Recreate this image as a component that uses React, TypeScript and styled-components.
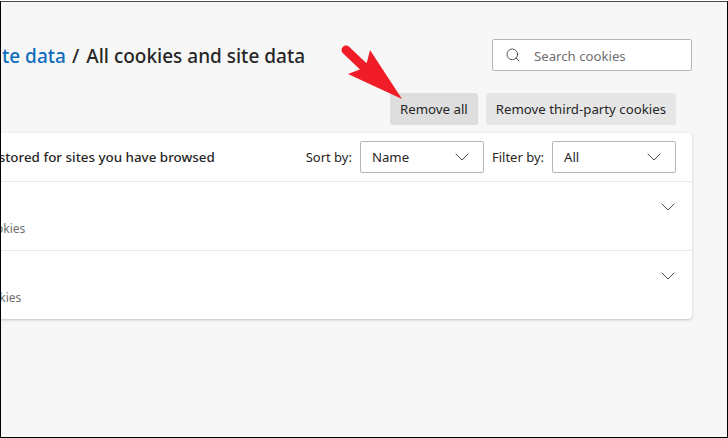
import * as React from 'react'

import styled, { createGlobalStyle } from 'styled-components'
import { ChevronDown, Search } from 'lucide-react'

const GlobalStyle = createGlobalStyle`
  html, body {
    margin: 0;
    padding: 0;
    background: #fff;
    font-family: "Noto Sans", "Open Sans", sans-serif;
  }
`

const Frame = styled.div`
  position: relative;
  box-sizing: border-box;
  width: 728px;
  height: 437px;
  margin-top: 1px;
  overflow: hidden;
  background: #f7f7f7;
  border-top: 1px solid #4a4a4a;
  border-left: 1px solid #000;
  border-right: 1px solid #000;
  border-bottom: 1px solid #000;
`

const Content = styled.div`
  display: flex;
  flex-direction: column;
  width: 826px;
  margin-left: -135px;
  padding-top: 37px;
`

const TitleRow = styled.div`
  display: flex;
  align-items: center;
  justify-content: space-between;
`

const Title = styled.h1`
  margin: 2px 0 0 6px;
  font-size: 19px;
  font-weight: 500;
  color: #262626;
  white-space: nowrap;
`

const Crumb = styled.a`
  margin-right: 6px;
  color: #0f6cbd;
`

const Separator = styled.span`
  margin-right: 7px;
`

const SearchBox = styled.label`
  box-sizing: border-box;
  display: flex;
  align-items: center;
  gap: 13px;
  width: 200px;
  height: 32px;
  padding-left: 12px;
  background: #fff;
  border: 1px solid #b5b5b5;
  border-radius: 2px;
  color: #3b3b3b;
`

const SearchInput = styled.input`
  flex: 1;
  min-width: 0;
  border: 0;
  outline: 0;
  padding: 1px 0 0;
  background: transparent;
  font: inherit;
  font-size: 13.2px;

  &::placeholder {
    color: #6f6f6f;
    opacity: 1;
  }
`

const Actions = styled.div`
  display: flex;
  justify-content: flex-end;
  gap: 8px;
  margin-top: 22px;
  padding-right: 16px;
`

const ActionButton = styled.button<{ $active?: boolean }>`
  height: 32px;
  padding: 0 10px;
  border: 0;
  border-radius: 2px;
  background: ${({ $active }) => ($active ? '#dedede' : '#e6e6e6')};
  color: #262626;
  font: inherit;
  font-size: 13.25px;
  white-space: nowrap;
`

const Card = styled.section`
  margin-top: 8px;
  background: #fff;
  border-radius: 4px;
  box-shadow: 0 1px 3px rgba(0, 0, 0, 0.22);
`

const CardHeader = styled.div`
  display: flex;
  align-items: center;
  justify-content: space-between;
  height: 48px;
  padding: 0 16px 0 19px;
`

const CardTitle = styled.h2`
  margin: 0;
  font-size: 13.4px;
  font-weight: 500;
  color: #262626;
  white-space: nowrap;
`

const Controls = styled.div`
  display: flex;
  align-items: center;
`

const ControlLabel = styled.span`
  margin: 0 8px;
  font-size: 13px;
  color: #262626;
  white-space: nowrap;
`

const Select = styled.div<{ $width: number }>`
  box-sizing: border-box;
  display: flex;
  align-items: center;
  justify-content: space-between;
  width: ${({ $width }) => $width}px;
  height: 32px;
  padding: 0 9px 0 11px;
  background: #fff;
  border: 1px solid #b5b5b5;
  border-radius: 2px;
  font-size: 13.2px;
  color: #262626;
`

const SiteRow = styled.div`
  box-sizing: border-box;
  display: flex;
  align-items: flex-start;
  justify-content: space-between;
  height: 69px;
  padding: 13px 12px 0 20px;
  border-top: 1px solid #e8e8e8;
`

const SiteInfo = styled.div<{ $indent: number }>`
  display: flex;
  flex-direction: column;
  gap: 1px;
  padding-top: 5px;
  padding-left: ${({ $indent }) => $indent}px;
`

const SiteName = styled.span`
  font-size: 13px;
  line-height: 20px;
  color: #262626;
`

const SiteMeta = styled.span`
  font-size: 12px;
  line-height: 16px;
  color: #707070;
`

const Toggle = styled.span`
  display: flex;
  color: #4a4a4a;
`

const Pointer = styled.svg`
  position: absolute;
  top: -2px;
  left: -1px;
  width: 728px;
  height: 438px;
  pointer-events: none;
`

const sites = [
  { name: 'msn', meta: '2 cookies', indent: 87 },
  { name: 'bing', meta: '2 cookies', indent: 83 },
]

const App: React.FC = () => {
  return (
    <>
      <GlobalStyle />
      <Frame>
        <Content>
          <TitleRow>
            <Title>
              <Crumb>Cookies and site data</Crumb>
              <Separator>/</Separator>
              All cookies and site data
            </Title>
            <SearchBox>
              <Search size={16} strokeWidth={1.3} />
              <SearchInput placeholder="Search cookies" />
            </SearchBox>
          </TitleRow>
          <Actions>
            <ActionButton $active>Remove all</ActionButton>
            <ActionButton>Remove third-party cookies</ActionButton>
          </Actions>
          <Card>
            <CardHeader>
              <CardTitle>Cookies and data stored for sites you have browsed</CardTitle>
              <Controls>
                <ControlLabel>Sort by:</ControlLabel>
                <Select $width={124}>
                  Name <ChevronDown size={24} strokeWidth={1} color="#4a4a4a" />
                </Select>
                <ControlLabel>Filter by:</ControlLabel>
                <Select $width={124}>
                  All <ChevronDown size={24} strokeWidth={1} color="#4a4a4a" />
                </Select>
              </Controls>
            </CardHeader>
            {sites.map((site) => (
              <SiteRow key={site.name}>
                <SiteInfo $indent={site.indent}>
                  <SiteName>{site.name}</SiteName>
                  <SiteMeta>{site.meta}</SiteMeta>
                </SiteInfo>
                <Toggle>
                  <ChevronDown size={24} strokeWidth={1} />
                </Toggle>
              </SiteRow>
            ))}
          </Card>
        </Content>
        <Pointer viewBox="0 0 728 438">
          <line x1="346" y1="50" x2="366" y2="69" stroke="#f01c28" strokeWidth="9" strokeLinecap="round" />
          <polygon points="370,50 402,99 348,74 361,69 367,62" fill="#f01c28" />
        </Pointer>
      </Frame>
    </>
  )
}

export default App
